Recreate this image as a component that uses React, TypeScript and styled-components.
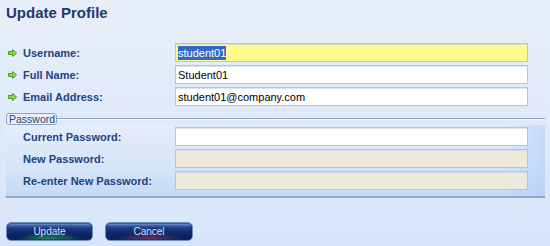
import React from "react";
import styled, { createGlobalStyle } from "styled-components";

const GlobalStyle = createGlobalStyle`
  html, body {
    margin: 0;
    padding: 0;
  }
  body {
    width: 550px;
    height: 246px;
    overflow: hidden;
    background: linear-gradient(180deg, #e8eff9 0%, #e0eaf9 45%, #d9e6fa 100%);
    font-family: "Liberation Sans", Arial, sans-serif;
  }
`;

const Page = styled.div`
  display: flex;
  flex-direction: column;
  padding: 4px 5px 0 6px;
`;

const Title = styled.h1`
  margin: 0;
  font-size: 15px;
  line-height: 18px;
  font-weight: bold;
  color: #1f3a6d;
`;

const Fields = styled.div<{ $top: number }>`
  display: flex;
  flex-direction: column;
  gap: 3px;
  margin-top: ${(p) => p.$top}px;
  padding-right: 17px;
`;

const Row = styled.div`
  display: grid;
  grid-template-columns: 169px 353px;
  height: 19px;
  align-items: center;
`;

const Label = styled.div<{ $indent: number }>`
  display: flex;
  align-items: center;
  gap: 6px;
  padding-left: ${(p) => p.$indent}px;
  font-size: 11px;
  font-weight: bold;
  color: #224381;
  white-space: nowrap;
`;

type FieldVariant = "active" | "normal" | "disabled";

const fieldBg: Record<FieldVariant, string> = {
  active: "#fefc8c",
  normal: "#ffffff",
  disabled: "#eee9dd",
};

const Field = styled.div<{ $variant: FieldVariant }>`
  box-sizing: border-box;
  height: 19px;
  border: 1px solid #b6c6da;
  box-shadow: inset 0 1px 0 rgba(200, 210, 225, 0.6);
  background: ${(p) => fieldBg[p.$variant]};
  padding-left: 2px;
  display: flex;
  align-items: center;
  font-size: 11px;
  color: #000;
  white-space: nowrap;
  overflow: hidden;
`;

const Selected = styled.span`
  background: #316ac5;
  color: #ffffff;
  line-height: 14px;
`;

const Section = styled.div`
  margin-top: 7px;
  display: flex;
  flex-direction: column;
`;

const SectionHead = styled.div`
  display: flex;
  align-items: center;
  height: 12px;
`;

const Legend = styled.div`
  box-sizing: border-box;
  height: 12px;
  width: 51px;
  border: 1px solid #8aa3c4;
  border-radius: 3px;
  background: #e9f0fb;
  font-size: 10.5px;
  line-height: 10px;
  color: #2a4778;
  padding-left: 2px;
  overflow: hidden;
`;

const HeadLine = styled.div`
  flex: 1;
  height: 0;
  border-top: 1px solid #8ea5c2;
  border-bottom: 1px solid #f2f7ff;
`;

const SectionBody = styled.div`
  padding: 2px 0 6px 0;
  background:
    linear-gradient(to left, rgba(172, 205, 248, 0.55), rgba(172, 205, 248, 0) 45px),
    linear-gradient(180deg, #e5edfa 0%, #d6e5f9 60%, #c3daf8 100%);
  border-bottom: 2px solid #8ea8c8;
`;

const Buttons = styled.div`
  display: flex;
  gap: 12px;
  margin-top: 24px;
`;

const Button = styled.button<{ $glow: "green" | "purple"; $w: number }>`
  box-sizing: border-box;
  width: ${(p) => p.$w}px;
  height: 19px;
  padding: 0;
  border: 1px solid #6d8cc0;
  border-radius: 5px;
  font-family: "Liberation Sans", Arial, sans-serif;
  font-size: 10px;
  color: #d2e0f6;
  background:
    radial-gradient(ellipse 40% 45% at 50% 100%,
      ${(p) => (p.$glow === "green" ? "rgba(40, 190, 90, 0.75)" : "rgba(170, 60, 110, 0.7)")},
      rgba(0, 0, 0, 0) 100%),
    linear-gradient(180deg, #9fbbe8 0%, #4a6bb0 12%, #1e3a85 30%, #0d2466 65%, #0a1d58 100%);
  box-shadow: inset 0 0 0 1px rgba(20, 40, 100, 0.6);
  cursor: pointer;
`;

const Arrow = () => (
  <svg width="9" height="8" viewBox="0 0 9 8">
    <path
      d="M0.5 2.5 H4.5 V0.5 L8.5 4 L4.5 7.5 V5.5 H0.5 Z"
      fill="#8fd24e"
      stroke="#4d9a2a"
      strokeWidth="1"
      strokeLinejoin="round"
    />
  </svg>
);

type RowData = { label: string; value?: string; variant: FieldVariant; selected?: boolean };

const profileRows: RowData[] = [
  { label: "Username:", value: "student01", variant: "active", selected: true },
  { label: "Full Name:", value: "Student01", variant: "normal" },
  { label: "Email Address:", value: "student01@company.com", variant: "normal" },
];

const passwordRows: RowData[] = [
  { label: "Current Password:", variant: "normal" },
  { label: "New Password:", variant: "disabled" },
  { label: "Re-enter New Password:", variant: "disabled" },
];

export default function App() {
  return (
    <>
      <GlobalStyle />
      <Page>
        <Title>Update Profile</Title>
        <Fields $top={21}>
          {profileRows.map((r) => (
            <Row key={r.label}>
              <Label $indent={2}>
                <Arrow />
                {r.label}
              </Label>
              <Field $variant={r.variant}>
                {r.selected ? <Selected>{r.value}</Selected> : r.value}
              </Field>
            </Row>
          ))}
        </Fields>
        <Section>
          <SectionHead>
            <Legend>Password</Legend>
            <HeadLine />
          </SectionHead>
          <SectionBody>
            <Fields $top={0}>
              {passwordRows.map((r) => (
                <Row key={r.label}>
                  <Label $indent={17}>{r.label}</Label>
                  <Field $variant={r.variant} />
                </Row>
              ))}
            </Fields>
          </SectionBody>
        </Section>
        <Buttons>
          <Button $glow="green" $w={87}>Update</Button>
          <Button $glow="purple" $w={88}>Cancel</Button>
        </Buttons>
      </Page>
    </>
  );
}
